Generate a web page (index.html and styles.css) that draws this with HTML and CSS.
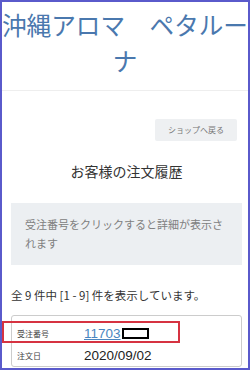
FILE: index.html
```html
<!DOCTYPE html>
<html lang="ja">
<head>
    <meta charset="UTF-8">
    <meta name="viewport" content="width=device-width, initial-scale=1.0">
    <title>お客様の注文履歴</title>
    <link rel="stylesheet" href="styles.css">
</head>
<body>
    <div class="frame">
        <header class="site-header">
            <h1 class="shop-title">沖縄アロマ　ペタルーナ</h1>
        </header>

        <main class="content">
            <div class="back-row">
                <a class="back-button" href="#">ショップへ戻る</a>
            </div>

            <h2 class="page-title">お客様の注文履歴</h2>

            <div class="info-box">受注番号をクリックすると詳細が表示されます</div>

            <p class="count">全 9 件中 [1 - 9] 件を表示しています。</p>

            <div class="order-card">
                <div class="order-row highlight">
                    <span class="label">受注番号</span>
                    <span class="value"><a href="#" class="order-link">11703</a><span class="masked"></span></span>
                </div>
                <div class="order-row">
                    <span class="label">注文日</span>
                    <span class="value">2020/09/02</span>
                </div>
            </div>
        </main>
    </div>
</body>
</html>
```

FILE: styles.css
```css
html, body {
    margin: 0;
    padding: 0;
    background: #fff;
}
body {
    font-family: "Noto Sans CJK JP", "Noto Sans", sans-serif;
    color: #333;
}
.frame {
    box-sizing: border-box;
    width: 250px;
    height: 370px;
    border: 2px solid #5a5acb;
    overflow: hidden;
}
.site-header {
    border-bottom: 1px solid #eee;
    height: 88px;
}
.shop-title {
    margin: 0 -2px;
    font-size: 24.6px;
    font-weight: normal;
    line-height: 36px;
    text-align: center;
    color: #4a78ae;
    padding-top: 4px;
}
.content {
    padding: 0 6px 0 9px;
}
.back-row {
    display: flex;
    justify-content: flex-end;
    padding-top: 28px;
    padding-right: 5px;
}
.back-button {
    display: block;
    background: #eef0f2;
    color: #777;
    font-size: 8px;
    text-decoration: none;
    padding: 6px 13px;
    line-height: 10px;
    border-radius: 2px;
}
.page-title {
    margin: 20px 0 0;
    font-size: 14px;
    line-height: 20px;
    font-weight: normal;
    text-align: center;
    color: #333;
}
.info-box {
    margin-top: 22px;
    background: #eceff2;
    color: #808080;
    font-size: 11px;
    line-height: 19px;
    padding: 12px 12px 12px 14px;
}
.count {
    margin: 22px 0 0;
    font-size: 11.5px;
    color: #333;
}
.order-card {
    margin-top: 12px;
    border: 1px solid #ccc;
    border-radius: 3px;
    padding: 6px 0 0;
}
.order-row {
    display: flex;
    align-items: center;
    padding: 0 5px;
    height: 22px;
}
.order-row .label {
    width: 67px;
    font-size: 8px;
    color: #444;
}
.order-row .value {
    font-family: "Liberation Sans", sans-serif;
    font-size: 13.5px;
    color: #222;
    display: flex;
    align-items: center;
}
.order-link {
    color: #4a86c0;
}
.masked {
    display: inline-block;
    width: 23px;
    height: 7px;
    border: 2px solid #000;
    margin-left: 1px;
}
.highlight {
    position: relative;
}
.highlight::after {
    content: "";
    position: absolute;
    left: -10px;
    top: -1px;
    width: 174px;
    height: 18px;
    border: 2px solid #d63341;
}
```
